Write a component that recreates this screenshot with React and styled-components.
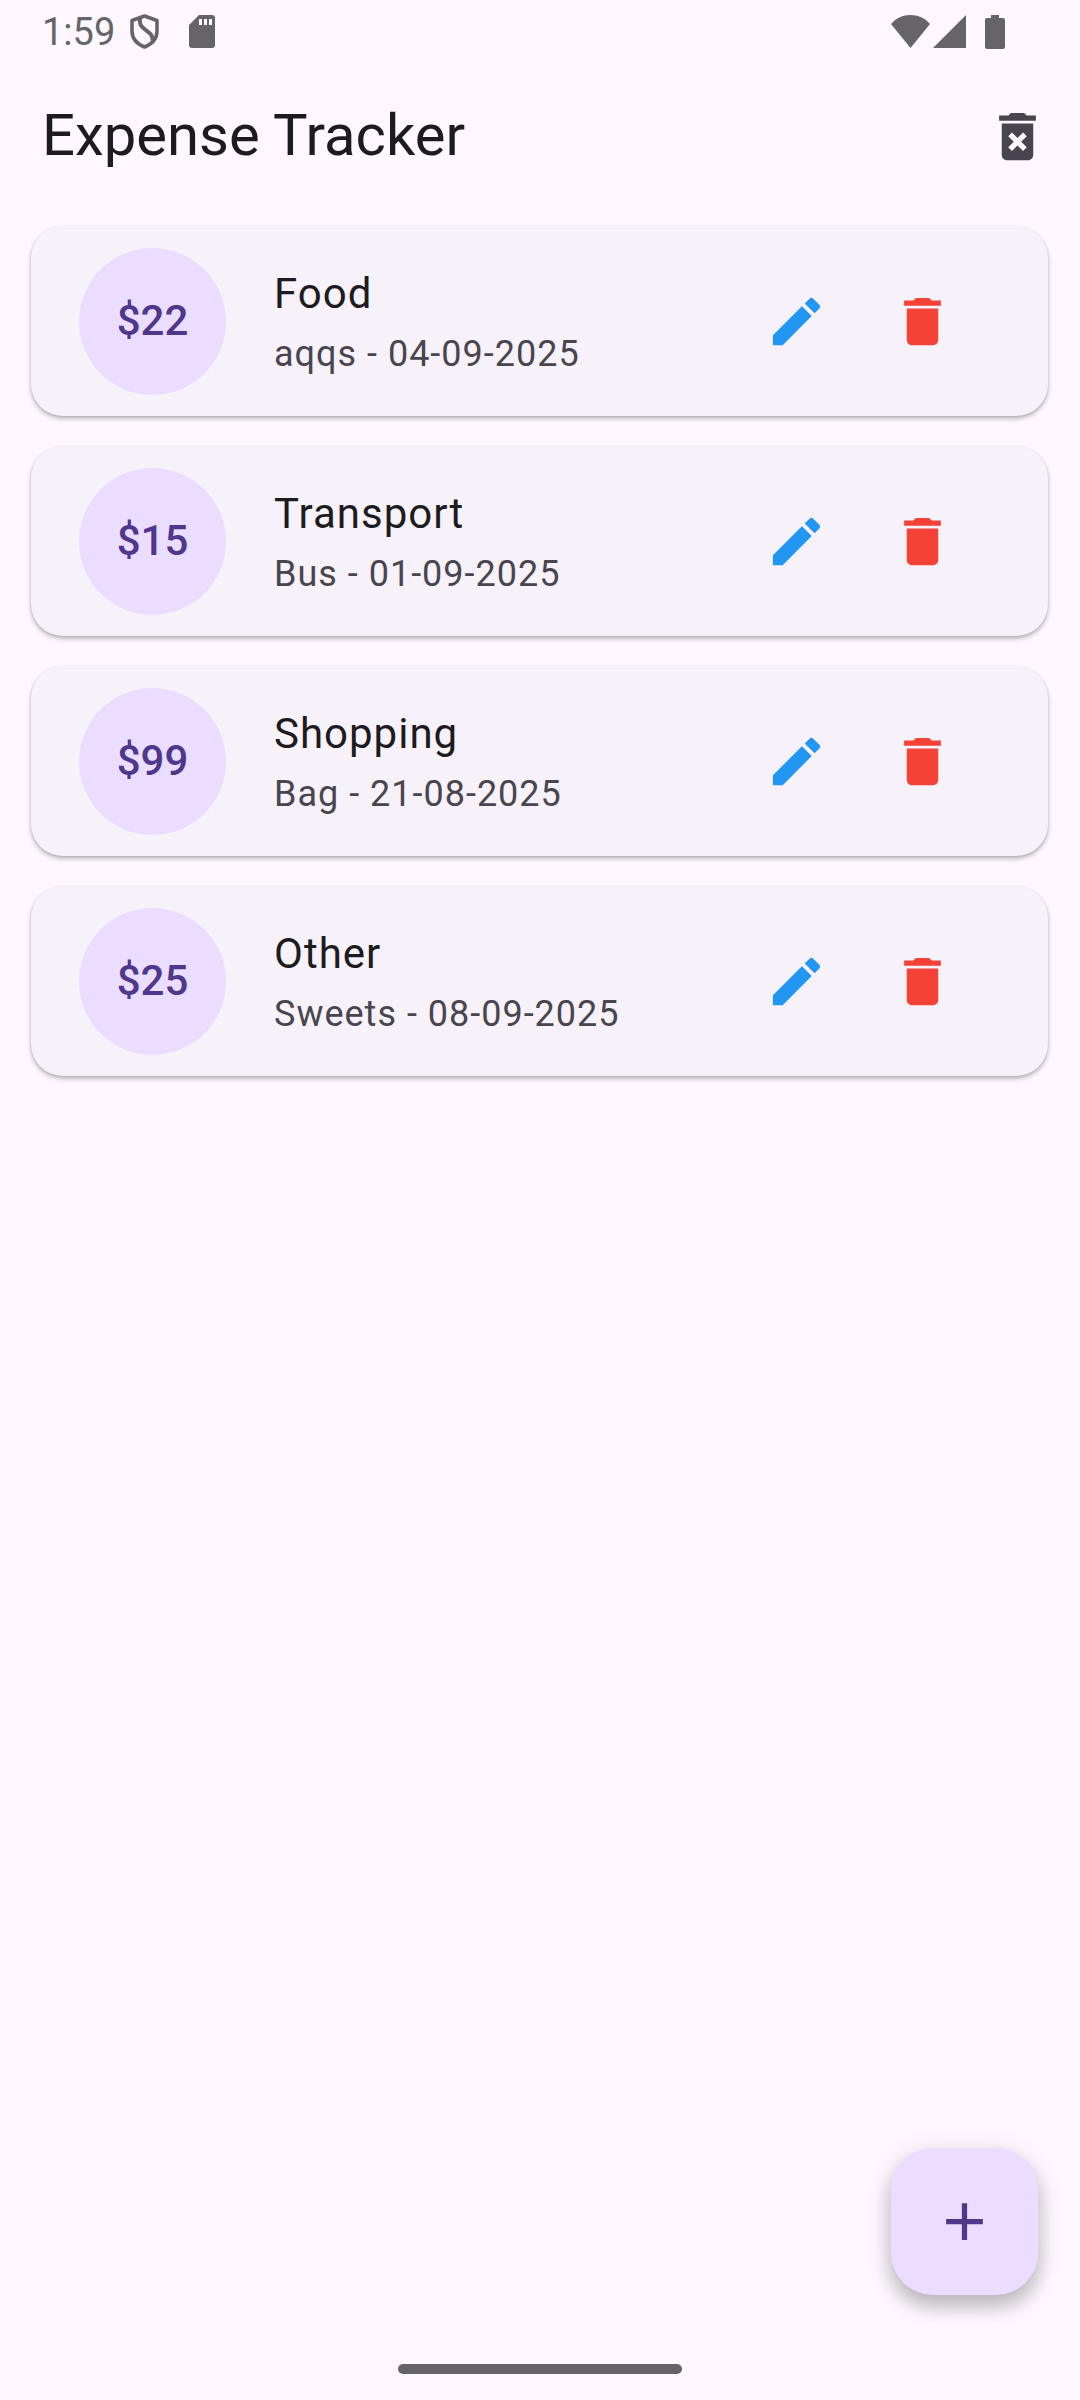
import React, { useState } from "react";
import styled, { createGlobalStyle } from "styled-components";

const GlobalStyle = createGlobalStyle`
  *, *::before, *::after { box-sizing: border-box; }
  body {
    margin: 0;
    background: #fef7ff;
    color: #1d1b20;
    font-family: Roboto, "Noto Sans", sans-serif;
  }
`;

const Screen = styled.div`
  display: flex;
  flex-direction: column;
  min-height: 100vh;
`;

const StatusBar = styled.div`
  display: flex;
  align-items: center;
  justify-content: space-between;
  height: 63px;
  padding: 0 75px 0 42px;
  color: #666468;
  font-size: 38px;
  line-height: 42px;
`;

const StatusGroup = styled.div`
  display: flex;
  align-items: center;
  gap: ${({ $gap }) => $gap}px;
`;

const StatusIcon = styled.svg`
  display: block;
  fill: currentColor;
`;

const AppBar = styled.header`
  display: flex;
  align-items: center;
  justify-content: space-between;
  height: 147px;
  padding-left: 42px;
`;

const Title = styled.h1`
  margin: 0;
  padding-bottom: 4px;
  font-size: 58px;
  font-weight: 400;
  line-height: 74px;
`;

const IconButton = styled.button`
  display: grid;
  place-items: center;
  width: 126px;
  height: 126px;
  padding: 0;
  border: 0;
  border-radius: 50%;
  background: transparent;
  color: ${({ $color }) => $color};
  cursor: pointer;
`;

const Glyph = styled.svg`
  display: block;
  width: 63px;
  height: 63px;
  fill: currentColor;
`;

const List = styled.ul`
  display: flex;
  flex-direction: column;
  gap: 30px;
  margin: 0;
  padding: 16px 32px 16px 31px;
  list-style: none;
`;

const Card = styled.li`
  display: flex;
  align-items: center;
  height: 190px;
  padding: 0 63px 0 48px;
  border-radius: 32px;
  background: #f7f2fa;
  box-shadow: 0 3px 5px rgba(0, 0, 0, 0.22), 0 1px 3px rgba(0, 0, 0, 0.14);
`;

const Amount = styled.div`
  display: grid;
  place-items: center;
  flex: none;
  width: 147px;
  height: 147px;
  padding-bottom: 2px;
  border-radius: 50%;
  background: #eaddff;
  color: #4f378b;
  font-size: 42px;
  font-weight: 500;
  line-height: 63px;
`;

const Details = styled.div`
  display: flex;
  flex: 1;
  flex-direction: column;
  gap: 3px;
  min-width: 0;
  margin-left: 48px;
`;

const Category = styled.div`
  font-size: 42px;
  line-height: 63px;
  letter-spacing: 1px;
`;

const Note = styled.div`
  color: #49454f;
  font-size: 36px;
  line-height: 53px;
  letter-spacing: 1px;
`;

const Footer = styled.footer`
  display: flex;
  flex-direction: column;
  align-items: center;
  gap: 69px;
  margin-top: auto;
  padding: 0 42px 26px;
`;

const AddButton = styled.button`
  display: grid;
  place-items: center;
  align-self: flex-end;
  width: 147px;
  height: 147px;
  padding: 0;
  border: 0;
  border-radius: 42px;
  background: #eaddff;
  color: #4f378b;
  box-shadow: 0 12px 20px rgba(0, 0, 0, 0.22), 0 4px 28px rgba(0, 0, 0, 0.1);
  cursor: pointer;
`;

const HomeIndicator = styled.div`
  width: 284px;
  height: 10px;
  border-radius: 5px;
  background: #666468;
`;

const initialExpenses = [
  { id: 1, amount: 22, category: "Food", note: "aqqs", date: "04-09-2025" },
  { id: 2, amount: 15, category: "Transport", note: "Bus", date: "01-09-2025" },
  { id: 3, amount: 99, category: "Shopping", note: "Bag", date: "21-08-2025" },
  { id: 4, amount: 25, category: "Other", note: "Sweets", date: "08-09-2025" },
];

const paths = {
  edit: "M3 17.25V21h3.75L17.81 9.94l-3.75-3.75L3 17.25zM20.71 7.04a1 1 0 0 0 0-1.41l-2.34-2.34a1 1 0 0 0-1.41 0l-1.83 1.83 3.75 3.75 1.83-1.83z",
  remove: "M6 19c0 1.1.9 2 2 2h8c1.1 0 2-.9 2-2V7H6v12zM19 4h-3.5l-1-1h-5l-1 1H5v2h14V4z",
  clear:
    "M6 19c0 1.1.9 2 2 2h8c1.1 0 2-.9 2-2V7H6v12zm2.46-7.12 1.41-1.41L12 12.59l2.12-2.12 1.41 1.41L13.41 14l2.12 2.12-1.41 1.41L12 15.41l-2.12 2.12-1.41-1.41L10.59 14l-2.13-2.12zM15.5 4l-1-1h-5l-1 1H5v2h14V4z",
  add: "M19 13h-6v6h-2v-6H5v-2h6V5h2v6h6v2z",
};

function Icon({ name }) {
  return (
    <Glyph viewBox="0 0 24 24" aria-hidden="true">
      <path d={paths[name]} />
    </Glyph>
  );
}

function Expense({ expense, onDelete }) {
  return (
    <Card>
      <Amount>${expense.amount}</Amount>
      <Details>
        <Category>{expense.category}</Category>
        <Note>
          {expense.note} - {expense.date}
        </Note>
      </Details>
      <IconButton type="button" $color="#2196f3" aria-label={`Edit ${expense.category}`}>
        <Icon name="edit" />
      </IconButton>
      <IconButton
        type="button"
        $color="#f44336"
        aria-label={`Delete ${expense.category}`}
        onClick={() => onDelete(expense.id)}
      >
        <Icon name="remove" />
      </IconButton>
    </Card>
  );
}

export default function App() {
  const [expenses, setExpenses] = useState(initialExpenses);
  const remove = (id) => setExpenses((list) => list.filter((e) => e.id !== id));

  return (
    <Screen>
      <GlobalStyle />
      <StatusBar>
        <StatusGroup $gap={15}>
          <span>1:59</span>
          <StatusGroup $gap={30}>
            <StatusIcon width="29" height="35" viewBox="0 0 29 35" aria-hidden="true">
              <path
                d="M14.5 2 27 6.5V17c0 7.5-5 13-12.5 16C7 30 2 24.5 2 17V6.500L14.5 2z"
                fill="none"
                stroke="currentColor"
                strokeWidth="3.6"
                strokeLinejoin="round"
              />
              <path
                d="M10 4c-1 6 1 8.500 5 11.500s8 5 7.500 11"
                fill="none"
                stroke="currentColor"
                strokeWidth="4"
              />
            </StatusIcon>
            <StatusIcon width="26" height="33" viewBox="0 0 26 33" aria-hidden="true">
              <path
                fillRule="evenodd"
                d="M10 0h13a3 3 0 0 1 3 3v27a3 3 0 0 1-3 3H3a3 3 0 0 1-3-3V10L10 0zM10 4v6h3V4zM15 4v6h3V4zM20 4v6h3V4z"
              />
            </StatusIcon>
          </StatusGroup>
        </StatusGroup>
        <StatusGroup $gap={19}>
          <StatusGroup $gap={3}>
            <StatusIcon width="39" height="33" viewBox="0 0 39 33" aria-hidden="true">
              <path d="M0 9C5 3 12 0 19.5 0S34 3 39 9L19.5 33 0 9z" />
            </StatusIcon>
            <StatusIcon width="33" height="33" viewBox="0 0 33 33" aria-hidden="true">
              <path d="M0 33 33 0v33H0z" />
            </StatusIcon>
          </StatusGroup>
          <StatusIcon width="20" height="34" viewBox="0 0 20 34" aria-hidden="true">
            <path d="M6 0h8v3h4a2 2 0 0 1 2 2v27a2 2 0 0 1-2 2H2a2 2 0 0 1-2-2V5a2 2 0 0 1 2-2h4V0z" />
          </StatusIcon>
        </StatusGroup>
      </StatusBar>

      <AppBar>
        <Title>Expense Tracker</Title>
        <IconButton
          type="button"
          $color="#49454f"
          aria-label="Delete all expenses"
          onClick={() => setExpenses([])}
        >
          <Icon name="clear" />
        </IconButton>
      </AppBar>

      <main>
        <List>
          {expenses.map((expense) => (
            <Expense key={expense.id} expense={expense} onDelete={remove} />
          ))}
        </List>
      </main>

      <Footer>
        <AddButton type="button" aria-label="Add expense">
          <Icon name="add" />
        </AddButton>
        <HomeIndicator />
      </Footer>
    </Screen>
  );
}
